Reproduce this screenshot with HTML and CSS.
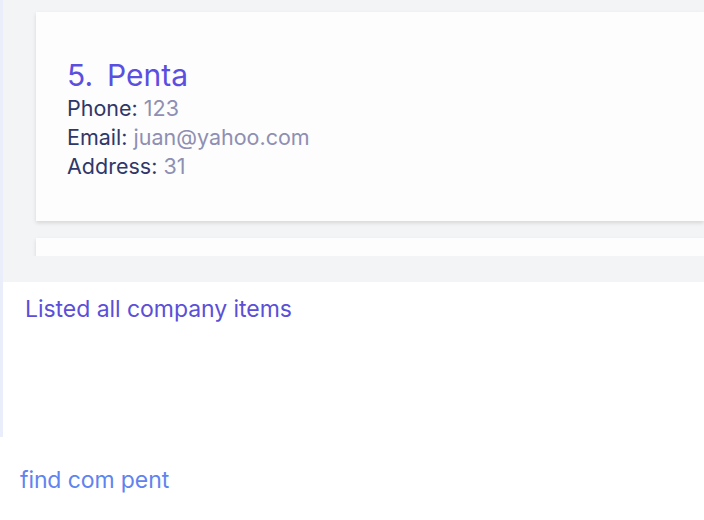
FILE: index.html
```html
<!DOCTYPE html>
<html>
<head>
<meta charset="utf-8">
<link rel="stylesheet" href="styles.css">
</head>
<body>
<div class="app">
  <div class="upper">
    <div class="list-area">
      <div class="list">
        <div class="card">
          <div class="title"><span class="idx">5.</span>Penta</div>
          <div class="row"><span class="label">Phone:</span> <span class="value">123</span></div>
          <div class="row"><span class="label">Email:</span> <span class="value">juan@yahoo.com</span></div>
          <div class="row"><span class="label">Address:</span> <span class="value">31</span></div>
        </div>
        <div class="card"></div>
      </div>
    </div>
    <div class="result">Listed all company items</div>
  </div>
  <div class="command">find com pent</div>
</div>
</body>
</html>
```
FILE: styles.css
```css
html, body {
  margin: 0;
  padding: 0;
  background: #ffffff;
  font-family: Inter, "Noto Sans", sans-serif;
}
.app {
  width: 704px;
  height: 520px;
  display: flex;
  flex-direction: column;
  overflow: hidden;
}
.upper {
  border-left: 3px solid #e9eefa;
  display: flex;
  flex-direction: column;
  height: 437px;
}
.list-area {
  background: #f3f4f6;
  height: 282px;
}
.list {
  height: 244px;
  padding: 12px 0 0 33px;
  overflow: hidden;
  display: flex;
  flex-direction: column;
  gap: 17px;
}
.card {
  background: #fdfdfd;
  box-shadow: 0 2px 4px rgba(0,0,0,0.12);
  box-sizing: border-box;
  height: 209px;
  padding: 44px 31px 0;
  flex-shrink: 0;
}
.title {
  font-size: 30px;
  line-height: 38px;
  color: #5b4fe0;
}
.idx {
  margin-right: 14px;
}
.row {
  font-size: 21.5px;
  line-height: 29px;
}
.label {
  color: #2f3769;
}
.value {
  color: #8e8fb2;
}
.result {
  background: #ffffff;
  flex: 1;
  padding: 13px 22px;
  font-size: 23px;
  line-height: 28px;
  color: #5b4fd8;
  letter-spacing: -0.05px;
}
.command {
  flex: 1;
  padding: 29px 20px 0;
  font-size: 23px;
  line-height: 28px;
  color: #5f84ef;
  letter-spacing: -0.1px;
}
```
